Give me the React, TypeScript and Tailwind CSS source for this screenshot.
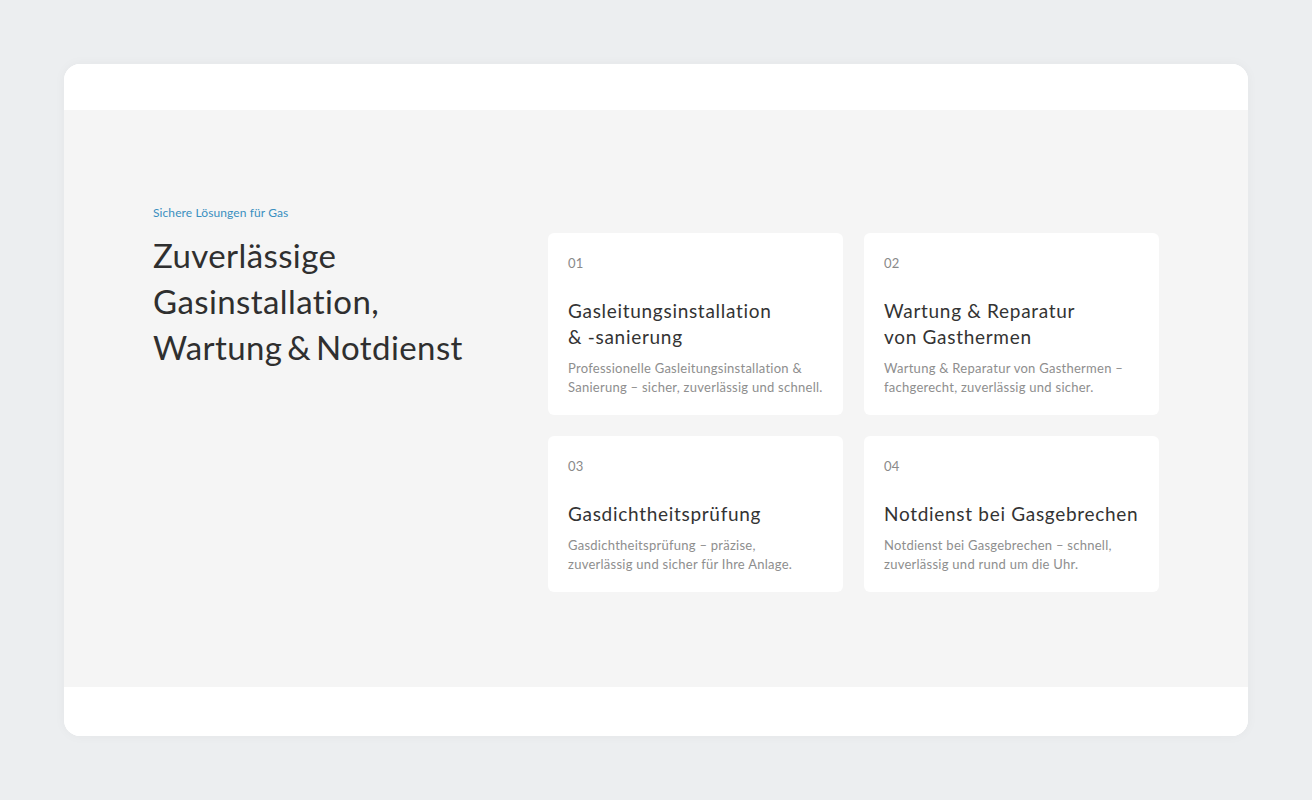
import React from "react";

const cards = [
  {
    n: "01",
    title: ["Gasleitungsinstallation", "& -sanierung"],
    desc: ["Professionelle Gasleitungsinstallation &", "Sanierung – sicher, zuverlässig und schnell."],
  },
  {
    n: "02",
    title: ["Wartung & Reparatur", "von Gasthermen"],
    desc: ["Wartung & Reparatur von Gasthermen –", "fachgerecht, zuverlässig und sicher."],
  },
  {
    n: "03",
    title: ["Gasdichtheitsprüfung"],
    desc: ["Gasdichtheitsprüfung – präzise,", "zuverlässig und sicher für Ihre Anlage."],
  },
  {
    n: "04",
    title: ["Notdienst bei Gasgebrechen"],
    desc: ["Notdienst bei Gasgebrechen – schnell,", "zuverlässig und rund um die Uhr."],
  },
];

export default function App() {
  return (
    <div
      className="min-h-screen bg-[#eceef0] p-16"
      style={{ fontFamily: "Lato, 'Noto Sans', sans-serif" }}
    >
      <div className="rounded-2xl bg-white overflow-hidden shadow-[0_0_12px_rgba(0,0,0,0.04)]">
        <div className="h-[46px] bg-white" />
        <section className="bg-[#f5f5f5] pt-24 pb-[95px]">
          <div className="mx-auto flex w-[1006px]">
            <div className="w-[395px] shrink-0">
              <p className="text-[12px] leading-[14px] text-[#3a8fc0] tracking-[0.1px]">
                Sichere Lösungen für Gas
              </p>
              <h2 className="mt-[12px] text-[33px] leading-[46px] tracking-[0.4px] [word-spacing:-4px] text-[#2f2f2f] font-normal">
                Zuverlässige
                <br />
                Gasinstallation,
                <br />
                Wartung &amp; Notdienst
              </h2>
            </div>
            <div className="mt-[27px] grid w-[611px] grid-cols-2 gap-[21px]">
              {cards.map((c) => (
                <div key={c.n} className="rounded-md bg-white px-5 pt-5 pb-[18px]">
                  <div className="text-[13px] leading-[20px] tracking-[0.3px] text-[#8a8a8a]">{c.n}</div>
                  <h3 className="mt-[25px] text-[19px] leading-[26px] tracking-[0.7px] text-[#333333]">
                    {c.title.map((t) => (
                      <span key={t} className="block whitespace-nowrap">
                        {t}
                      </span>
                    ))}
                  </h3>
                  <p className="mt-[9px] text-[13px] leading-[19px] tracking-[0.26px] text-[#8e8e8e]">
                    {c.desc.map((t) => (
                      <span key={t} className="block whitespace-nowrap">
                        {t}
                      </span>
                    ))}
                  </p>
                </div>
              ))}
            </div>
          </div>
        </section>
        <div className="h-[49px] bg-white" />
      </div>
    </div>
  );
}
